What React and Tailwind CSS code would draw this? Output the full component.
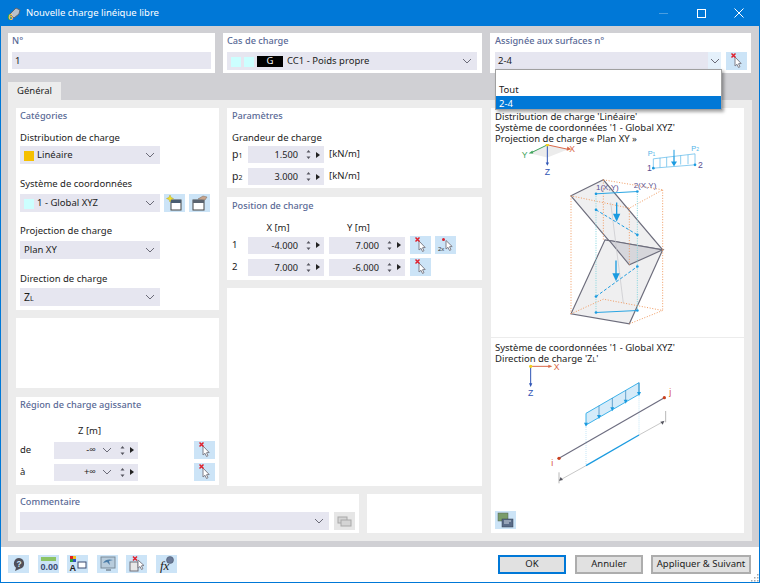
import React from "react";

const Chevron = ({ className = "" }) => (
  <svg width="10" height="6" viewBox="0 0 10 6" className={className}>
    <path d="M1 1l4 4 4-4" fill="none" stroke="#6b6b78" strokeWidth="1" />
  </svg>
);

const Pick = ({ two }) => (
  <button className="w-[21px] h-[18px] bg-[#cce4f7] flex items-center justify-center shrink-0">
    <svg width="21" height="18" viewBox="0 0 21 18">
      {two ? (
        <>
          <path d="M11 4.500l0 8.500 2-1.700 1.500 3.200 1.500-.8-1.500-3 2.700-.2z" fill="#fff" stroke="#80808a" strokeWidth="1" />
          <circle cx="8.500" cy="3.500" r="1.500" fill="#d8202c" />
          <text x="3" y="15" fontSize="6" fill="#333" fontFamily="Liberation Sans">2x</text>
        </>
      ) : (
        <>
          <path d="M9 5l0 9 2-1.700 1.500 3.200 1.500-.8-1.500-3 2.700-.2z" fill="#fff" stroke="#80808a" strokeWidth="1" />
          <path d="M5.500 1.500l4 4M9.500 1.500l-4 4" stroke="#e0202c" strokeWidth="1.500" />
        </>
      )}
    </svg>
  </button>
);

const Select = ({ w, children, className = "" }) => (
  <div className={`h-[18px] bg-[#e6e6f0] flex items-center pl-1 pr-[5px] text-[#1c1c1c] ${w} ${className}`}>
    <div className="flex-1 flex items-center min-w-0 pt-[1px]">{children}</div>
    <Chevron />
  </div>
);

const Arrows = () => (
  <div className="flex items-center ml-[8px] mr-[3px] gap-[5px]">
    <svg width="5" height="11" viewBox="0 0 5 11">
      <path d="M0.500 3.500L2.500 1l2 2.500zM0.500 7.500l2 2.500 2-2.500z" fill="#55555f" />
    </svg>
    <svg width="4" height="6" viewBox="0 0 4 6">
      <path d="M0 0l4 3-4 3z" fill="#222" />
    </svg>
  </div>
);

const Spin = ({ value }) => (
  <div className="w-[76px] h-[17px] bg-[#e6e6f0] flex items-center justify-end pr-[1px] text-[#1c1c1c] text-[9.200px]">
    <span className="pt-[1px]">{value}</span>
    <Arrows />
  </div>
);

const Infinite = ({ value }) => (
  <div className="w-[84px] h-[17px] bg-[#e6e6f0] flex items-center justify-end pr-[1px] text-[#1c1c1c]">
    <span className="mr-[6px] pt-[1px]">{value}</span>
    <Chevron />
    <Arrows />
  </div>
);

const Title = ({ children, className = "" }) => (
  <div className={`text-[#5a6a96] text-[9.200px] font-medium leading-[14px] ${className}`}>{children}</div>
);

const Label = ({ children }) => <div className="leading-[14px] text-[#1c1c1c]">{children}</div>;

const Swatch = ({ color }) => <span className={`inline-block w-[10px] h-[10px] mr-[3px] ${color}`}></span>;

const Sub = ({ children }) => <span className="text-[7px] align-baseline">{children}</span>;

const BottomIcon = ({ children }) => (
  <button className="w-[21px] h-[18px] bg-[#cce4f7] flex items-center justify-center">
    <svg width="21" height="18" viewBox="0 0 21 18">{children}</svg>
  </button>
);

const Btn = ({ w, primary, children }) => (
  <button className={`h-[19px] bg-[#e1e1e1] flex items-center justify-center whitespace-nowrap text-[#1c1c1c] ${w} ${primary ? "border-2 border-[#0078d7]" : "border-2 border-[#adadad]"}`}>
    {children}
  </button>
);

const LoadDiagram = () => (
  <svg width="253" height="191" viewBox="3 103 759 572" className="block" fontFamily="Liberation Sans">
    {/* small axes */}
    <path d="M172 105L235 118 172 143 118 130z" fill="#ececec" />
    <path d="M172 105L232 118" stroke="#d9694a" strokeWidth="3" />
    <path d="M232 110l12 8-14 5z" fill="#d9694a" />
    <path d="M172 105L125 128" stroke="#3fa45b" strokeWidth="3" />
    <path d="M116 131l11-9 3 9z" fill="#3fa45b" />
    <path d="M172 105V160" stroke="#2f55b5" strokeWidth="3" />
    <path d="M167 158h10l-5 10z" fill="#2f55b5" />
    <circle cx="172" cy="105" r="5" fill="#f2d21c" />
    <text x="238" y="128" fontSize="26" fill="#d9694a">X</text>
    <text x="95" y="145" fontSize="26" fill="#3fa45b">Y</text>
    <text x="164" y="195" fontSize="26" fill="#2f55b5">Z</text>
    {/* load sketch */}
    <path d="M490 175V147L615 132V165zM510 144v29M530 142v29M552 140v27M572 137v27M594 135v28" fill="none" stroke="#52b4e8" strokeWidth="2" />
    <path d="M552 120v40" stroke="#1b9be0" strokeWidth="3" />
    <path d="M543 155h18l-9 14z" fill="#1b9be0" />
    <circle cx="490" cy="175" r="4" fill="#1b9be0" />
    <circle cx="615" cy="165" r="4" fill="#1b9be0" />
    <text x="473" y="138" fontSize="22" fill="#52b4e8">P<tspan fontSize="15">1</tspan></text>
    <text x="604" y="125" fontSize="22" fill="#52b4e8">P<tspan fontSize="15">2</tspan></text>
    <text x="471" y="183" fontSize="26" fill="#5a5090">1</text>
    <text x="624" y="175" fontSize="26" fill="#5a5090">2</text>
    {/* surfaces */}
    <path d="M243 258L340 210 518 420 418 465z" fill="#efeff0" stroke="#6d6d7c" strokeWidth="3.500" />
    <path d="M345 390L518 420 418 642 243 612z" fill="#efeff0" stroke="#6d6d7c" strokeWidth="3.500" />
    <path d="M358 392L518 420 418 465z" fill="#d6d6db" stroke="#6d6d7c" strokeWidth="3.500" />
    <path d="M362 278L400 580" stroke="#c4c4c8" strokeWidth="2" />
    {/* bounding box */}
    <g fill="none" stroke="#f09a60" strokeWidth="3" strokeDasharray="3 5">
      <path d="M243 258V612M518 240V420M418 295V465M340 210V390" />
      <path d="M340 210L518 240 418 295 243 258" />
      <path d="M243 612L340 568 518 602 418 642" />
      <path d="M518 420L518 600" />
    </g>
    {/* load lines */}
    <g fill="none" stroke="#7fd4dd" strokeWidth="3" strokeDasharray="3 4">
      <path d="M318 252V608M442 245V602" />
    </g>
    <path d="M318 252L442 245M318 608L442 602" stroke="#2ba6e3" strokeWidth="3" />
    <path d="M318 300L442 375M318 560L442 470" stroke="#1b9be0" strokeWidth="3" strokeDasharray="9 6" />
    <g fill="#1b9be0">
      <circle cx="318" cy="252" r="4" /><circle cx="442" cy="245" r="4" />
      <circle cx="318" cy="300" r="4" /><circle cx="442" cy="375" r="4" />
      <circle cx="318" cy="560" r="4" /><circle cx="442" cy="470" r="4" />
      <circle cx="318" cy="608" r="4" /><circle cx="442" cy="602" r="4" />
      <path d="M369 312h22l-11 24z" /><path d="M367 490h22l-11 24z" />
    </g>
    <path d="M380 278V318M378 452V495" stroke="#1b9be0" strokeWidth="4" />
    <text x="318" y="240" fontSize="24" fill="#5a5090">1(X,Y)</text>
    <text x="431" y="236" fontSize="24" fill="#5a5090">2(X,Y)</text>
  </svg>
);

const DirectionDiagram = () => (
  <svg width="253" height="142" viewBox="3 87 759 426" className="block" fontFamily="Liberation Sans">
    <path d="M122 94H178" stroke="#d9694a" strokeWidth="3" />
    <path d="M175 89l12 5-12 5z" fill="#d9694a" />
    <path d="M122 94V148" stroke="#2f55b5" strokeWidth="3" />
    <path d="M117 145h10l-5 11z" fill="#2f55b5" />
    <circle cx="122" cy="94" r="5" fill="#f2d21c" />
    <text x="191" y="105" fontSize="26" fill="#d9694a">X</text>
    <text x="114" y="184" fontSize="26" fill="#2f55b5">Z</text>
    <path d="M288 235L447 143V178L288 270z" fill="#d5ebf9" stroke="#3db2ea" strokeWidth="3" />
    <path d="M288 270V392M447 178V300" stroke="#c5e6f7" strokeWidth="3" strokeDasharray="3 3" />
    <path d="M327 212V245M367 189V222M407 166V199M447 143V175" stroke="#2f7fb8" strokeWidth="2" />
    <g fill="#1b9be0">
      <path d="M282 263h12l-6 12z" /><path d="M321 240h12l-6 12z" /><path d="M361 217h12l-6 12z" />
      <path d="M401 194h12l-6 12z" /><path d="M441 171h12l-6 12z" />
    </g>
    <path d="M207 370L523 188" stroke="#6d6d80" strokeWidth="3.500" />
    <circle cx="207" cy="370" r="5" fill="#c9401f" />
    <circle cx="523" cy="188" r="5" fill="#c9401f" />
    <text x="538" y="180" fontSize="26" fill="#d9502f">j</text>
    <text x="184" y="392" fontSize="26" fill="#d9502f">i</text>
    <path d="M207 437L288 392M447 300L523 258" stroke="#c8c8c8" strokeWidth="3" />
    <path d="M288 392L447 300" stroke="#1b9be0" strokeWidth="4" />
    <path d="M207 412V445M527 228V262" stroke="#b8b8b8" strokeWidth="3" />
    <path d="M207 437l12-2-7-9zM523 258l-12 2 7 9z" fill="#55555f" />
  </svg>
);

export default function App() {
  return (
    <div className="w-[760px] h-[583px] flex flex-col border-x border-b border-[#0078d7] overflow-hidden bg-white text-[9.500px] relative font-['Noto_Sans','Open_Sans',sans-serif]">
      {/* title bar */}
      <div className="h-[26px] bg-[#0078d7] flex items-center pl-[6px] text-white shrink-0">
        <svg width="15" height="15" viewBox="0 0 15 15">
          <path d="M3 8l6-6 4 2-1 4-5 4z" fill="#b8c0cc" stroke="#5a6470" strokeWidth="1" />
          <text x="1" y="14" fontSize="9" fontWeight="700" fill="#f4c430" fontFamily="Liberation Sans">6</text>
        </svg>
        <span className="ml-[4px]">Nouvelle charge linéique libre</span>
        <div className="ml-auto flex items-center">
          <div className="w-[9px] h-[1px] bg-[#4a9ee0] mr-[29px]"></div>
          <div className="w-[9px] h-[9px] border border-white mr-[28px]"></div>
          <svg width="10" height="10" viewBox="0 0 10 10" className="mr-[15px]">
            <path d="M0.500 0.500l9 9M9.500 0.500l-9 9" stroke="#fff" strokeWidth="1" />
          </svg>
        </div>
      </div>

      {/* main area */}
      <div className="flex-1 bg-[#d0d0d4] px-[7px] pt-[7px] pb-[6px] flex flex-col min-h-0">
        <div className="flex gap-[8px] h-[40px] shrink-0">
          <div className="w-[207px] bg-white px-1 pt-[1px]">
            <Title className="mb-[4px]">N°</Title>
            <div className="h-[17px] bg-[#e6e6f0] flex items-center pl-[3px] pt-[1px] text-[#1c1c1c]">1</div>
          </div>
          <div className="w-[259px] bg-white px-1 pt-[1px]">
            <Title className="mb-[4px]">Cas de charge</Title>
            <Select w="w-[250px]">
              <Swatch color="bg-[#ccffff]" />
              <Swatch color="bg-[#ccffff]" />
              <span className="w-[26px] h-[11px] bg-black text-white flex items-center justify-center mr-[4px]">G</span>
              <span>CC1 - Poids propre</span>
            </Select>
          </div>
          <div className="w-[261px] bg-white pl-[5px] pt-[1px]">
            <Title className="mb-[4px]">Assignée aux surfaces n°</Title>
            <div className="flex gap-[5px]">
              <div className="w-[226px] h-[18px] bg-[#e6e6f0] flex items-center pl-[3px] text-[#1c1c1c]">
                <span className="flex-1">2-4</span>
                <div className="w-[13px] h-[18px] bg-[#e5f1fb] flex items-center justify-center">
                  <Chevron />
                </div>
              </div>
              <Pick />
            </div>
          </div>
        </div>

        <div className="mt-[9px] w-[53px] h-[18px] bg-[#ececec] flex items-center justify-center text-[#1c1c1c] shrink-0">Général</div>

        <div className="flex-1 bg-[#ececec] p-[8px] flex gap-[9px] min-h-0">
          <div className="w-[466px] flex flex-col gap-[8px]">
            <div className="flex gap-[8px] h-[378px]">
              <div className="w-[203px] flex flex-col">
                <div className="h-[202px] bg-white px-1 pt-[1px] flex flex-col">
                  <Title className="mb-[8px]">Catégories</Title>
                  <Label>Distribution de charge</Label>
                  <Select w="w-[140px]" className="mt-[1px]">
                    <Swatch color="bg-[#f5c000]" />
                    <span>Linéaire</span>
                  </Select>
                  <div className="mt-[13px]"><Label>Système de coordonnées</Label></div>
                  <div className="flex gap-[4px] mt-[3px]">
                    <Select w="w-[140px]">
                      <Swatch color="bg-[#ccffff]" />
                      <span>1 - Global XYZ</span>
                    </Select>
                    <button className="w-[21px] h-[18px] bg-[#cce4f7] flex items-center justify-center">
                      <svg width="21" height="18" viewBox="0 0 21 18">
                        <rect x="7" y="6" width="10" height="10" fill="#fff" stroke="#444" />
                        <rect x="7" y="6" width="10" height="3" fill="#4a5c70" />
                        <path d="M6 1l1 2.500 2.500 1-2.500 1-1 2.500-1-2.500-2.500-1 2.500-1z" fill="#f0e030" stroke="#b8a820" strokeWidth="0.500" />
                      </svg>
                    </button>
                    <button className="w-[21px] h-[18px] bg-[#cce4f7] flex items-center justify-center">
                      <svg width="21" height="18" viewBox="0 0 21 18">
                        <rect x="4" y="6" width="11" height="10" fill="#fff" stroke="#444" />
                        <rect x="4" y="6" width="11" height="3" fill="#5a6470" />
                        <path d="M9 5l5-3 4 1-2 3z" fill="#c8a48c" stroke="#7a6a60" strokeWidth="0.500" />
                      </svg>
                    </button>
                  </div>
                  <div className="mt-[12px]"><Label>Projection de charge</Label></div>
                  <Select w="w-[140px]" className="mt-[3px]">Plan XY</Select>
                  <div className="mt-[13px]"><Label>Direction de charge</Label></div>
                  <Select w="w-[140px]" className="mt-[2px]">
                    <span className="text-[10.500px]">Z<Sub>L</Sub></span>
                  </Select>
                </div>
                <div className="h-[70px] bg-white mt-[8px]"></div>
                <div className="h-[88px] bg-white mt-[9px] px-1 pt-[1px]">
                  <Title>Région de charge agissante</Title>
                  <div className="pl-[58px] mt-[12px] leading-[14px] text-[#1c1c1c]">Z [m]</div>
                  <div className="flex items-center mt-[3px]">
                    <span className="w-[34px] text-[#1c1c1c]">de</span>
                    <Infinite value="-∞" />
                    <div className="ml-[56px]"><Pick /></div>
                  </div>
                  <div className="flex items-center mt-[4px]">
                    <span className="w-[34px] text-[#1c1c1c]">à</span>
                    <Infinite value="+∞" />
                    <div className="ml-[56px]"><Pick /></div>
                  </div>
                </div>
              </div>

              <div className="w-[255px] flex flex-col">
                <div className="h-[80px] bg-white px-[5px] pt-[1px]">
                  <Title className="mb-[8px]">Paramètres</Title>
                  <Label>Grandeur de charge</Label>
                  <div className="flex items-center mt-[1px] text-[#1c1c1c]">
                    <span className="w-[16px] text-[10.500px]">p<Sub>1</Sub></span>
                    <Spin value="1.500" />
                    <span className="ml-[5px]">[kN/m]</span>
                  </div>
                  <div className="flex items-center mt-[5px] text-[#1c1c1c]">
                    <span className="w-[16px] text-[10.500px]">p<Sub>2</Sub></span>
                    <Spin value="3.000" />
                    <span className="ml-[5px]">[kN/m]</span>
                  </div>
                </div>
                <div className="h-[83px] bg-white mt-[9px] px-[5px] pt-[2px]">
                  <Title>Position de charge</Title>
                  <div className="flex mt-[8px] leading-[14px] text-[#1c1c1c]">
                    <span className="w-[92px] text-center">X [m]</span>
                    <span className="w-[69px] text-center">Y [m]</span>
                  </div>
                  <div className="flex items-center gap-[5px] mt-[1px] text-[#1c1c1c]">
                    <span className="w-[11px]">1</span>
                    <Spin value="-4.000" />
                    <Spin value="7.000" />
                    <div className="flex gap-[4px]"><Pick /><Pick two /></div>
                  </div>
                  <div className="flex items-center gap-[5px] mt-[4px] text-[#1c1c1c]">
                    <span className="w-[11px]">2</span>
                    <Spin value="7.000" />
                    <Spin value="-6.000" />
                    <Pick />
                  </div>
                </div>
                <div className="flex-1 bg-white mt-[8px]"></div>
              </div>
            </div>

            <div className="flex gap-[8px] h-[39px]">
              <div className="w-[343px] bg-white px-1 pt-[1px]">
                <Title className="mb-[3px]">Commentaire</Title>
                <div className="flex gap-[5px]">
                  <Select w="w-[309px]"></Select>
                  <button className="w-[21px] h-[18px] bg-[#e6e6e6] flex items-center justify-center">
                    <svg width="15" height="11" viewBox="0 0 15 11">
                      <rect x="1" y="1" width="9" height="6" fill="#d4d4d4" stroke="#a8a8a8" />
                      <rect x="4" y="4" width="10" height="6" fill="#d4d4d4" stroke="#a8a8a8" />
                    </svg>
                  </button>
                </div>
              </div>
              <div className="w-[115px] bg-white"></div>
            </div>
          </div>

          <div className="w-[253px] bg-white flex flex-col text-[#1c1c1c]">
            <div className="h-[230px] border-b border-[#ececec] shrink-0">
              <div className="h-[36px] pl-[4px] pt-[3px] leading-[11px]">
                <div>Distribution de charge 'Linéaire'</div>
                <div>Système de coordonnées '1 - Global XYZ'</div>
                <div>Projection de charge « Plan XY »</div>
              </div>
              <LoadDiagram />
            </div>
            <div className="h-[26px] pl-[4px] pt-[4px] leading-[11px] shrink-0">
              <div>Système de coordonnées '1 - Global XYZ'</div>
              <div>Direction de charge 'Z<Sub>L</Sub>'</div>
            </div>
            <DirectionDiagram />
            <button className="w-[21px] h-[18px] bg-[#cce4f7] ml-[4px] mt-[5px] flex items-center justify-center">
              <svg width="21" height="18" viewBox="0 0 21 18">
                <rect x="3" y="2" width="10" height="8" fill="#7a9c6a" stroke="#50605a" strokeWidth="0.500" />
                <rect x="7" y="8" width="11" height="8" fill="#5a6c88" stroke="#303c50" strokeWidth="0.500" />
                <path d="M9 10h7M9 12h5" stroke="#cfd8e4" strokeWidth="1" />
              </svg>
            </button>
          </div>
        </div>
      </div>

      {/* bottom bar */}
      <div className="h-[35px] bg-white flex items-center pl-[7px] shrink-0 pb-[1px]">
        <div className="flex gap-[8.500px]">
          <BottomIcon>
            <path d="M11 3a5.500 5.500 0 0 1 1 10.800l-5 2.200 1-3.200A5.500 5.500 0 0 1 11 3z" fill="#50505a" />
            <text x="8.500" y="12" fontSize="8.500" fontWeight="700" fill="#cce4f7" fontFamily="Liberation Sans">?</text>
          </BottomIcon>
          <BottomIcon>
            <rect x="3" y="2" width="15" height="4" fill="#8cc464" />
            <text x="2.500" y="15" fontSize="9" fontWeight="700" fill="#3a4a70" fontFamily="Liberation Sans">0.00</text>
          </BottomIcon>
          <BottomIcon>
            <rect x="3" y="1" width="3" height="3" fill="#e02020" />
            <rect x="6" y="1" width="3" height="3" fill="#f0c020" />
            <rect x="3" y="4" width="3" height="3" fill="#30a040" />
            <rect x="6" y="4" width="3" height="3" fill="#3050c0" />
            <text x="2.500" y="16" fontSize="9" fontWeight="700" fill="#222" fontFamily="Liberation Sans">A</text>
            <rect x="11" y="7" width="8" height="6" fill="#fff" stroke="#3a4a70" />
          </BottomIcon>
          <BottomIcon>
            <rect x="4" y="2" width="14" height="11" fill="#b8ccdc" stroke="#7a8a98" />
            <path d="M6 8c2-4 7-4 10-3l-4 1 1 4-3-3z" fill="#4a7ca8" />
            <path d="M9 15h5" stroke="#7a8a98" strokeWidth="1.500" />
          </BottomIcon>
          <BottomIcon>
            <rect x="4" y="7" width="8" height="9" fill="#e8e8e8" stroke="#70707a" />
            <path d="M7 1.500l4 4M11 1.500l-4 4" stroke="#e0202c" strokeWidth="1.500" />
            <path d="M12 5l0 8 2-1.500 1.500 3 1.400-.7-1.500-3 2.600-.3z" fill="#fff" stroke="#80808a" />
          </BottomIcon>
          <BottomIcon>
            <text x="4" y="15" fontSize="13" fontStyle="italic" fontFamily="Liberation Serif" fill="#222">fx</text>
            <circle cx="14" cy="5" r="3.500" fill="#6a7a98" stroke="#404c60" strokeWidth="0.500" />
          </BottomIcon>
        </div>
        <div className="ml-auto flex mr-[8px]">
          <Btn w="w-[68px]" primary>OK</Btn>
          <div className="ml-[9px]"><Btn w="w-[68px]">Annuler</Btn></div>
          <div className="ml-[8px]"><Btn w="w-[100px]">Appliquer &amp; Suivant</Btn></div>
        </div>
      </div>

      {/* resize grip */}
      <svg width="8" height="8" viewBox="0 0 8 8" className="absolute right-0 bottom-0">
        <path d="M6 0h1.500v1.500H6zM6 3h1.500v1.500H6zM3 3h1.500v1.500H3zM6 6h1.500v1.500H6zM3 6h1.500v1.500H3zM0 6h1.500v1.500H0z" fill="#a8a8a8" />
      </svg>

      {/* open dropdown list */}
      <div className="absolute left-[494px] top-[69px] w-[227px] h-[41px] bg-white border border-[#a0a0a0] shadow-[2px_2px_3px_rgba(0,0,0,0.35)] flex flex-col justify-end text-[#1c1c1c]">
        <div className="h-[13px] leading-[13px] pl-[3px] mb-[1px]"><span className="block translate-y-[1px]">Tout</span></div>
        <div className="h-[13px] leading-[13px] pl-[3px] bg-[#0078d7] text-white"><span className="block translate-y-[1px]">2-4</span></div>
      </div>
    </div>
  );
}
